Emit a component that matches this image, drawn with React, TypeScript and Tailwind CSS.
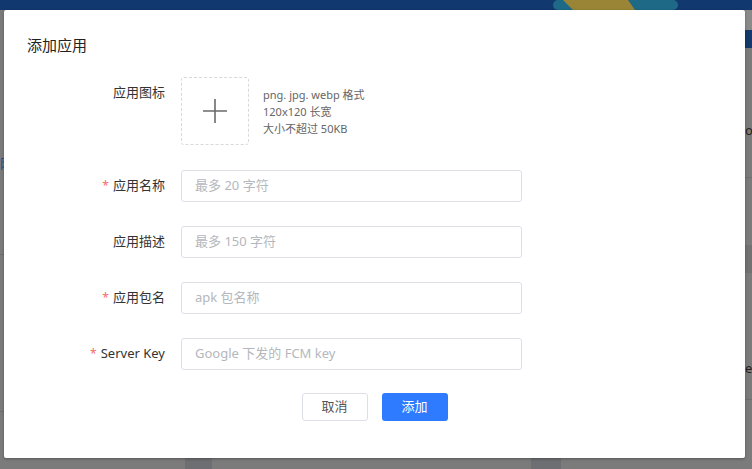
import React from "react";

const font = { fontFamily: '"Noto Sans", "Noto Sans CJK SC", sans-serif' };

function Label({ text, required }: { text: string; required?: boolean }) {
  return (
    <div className="w-[161px] h-[32px] flex items-center justify-end text-[13px] text-[#333]">
      {required && <span className="text-[#f56c6c] mr-[4px] text-[12px]">*</span>}
      {text}
    </div>
  );
}

function Field({
  label,
  required,
  placeholder,
}: {
  label: string;
  required?: boolean;
  placeholder: string;
}) {
  return (
    <div className="flex items-start gap-[16px]">
      <Label text={label} required={required} />
      <div className="w-[341px] h-[32px] border border-[#dcdfe6] rounded-[3px] flex items-center pl-[13px] text-[13px] text-[#b4b7bd]">
        {placeholder}
      </div>
    </div>
  );
}

export default function App() {
  return (
    <div className="relative w-[752px] h-[469px] overflow-hidden bg-[#7b7b7b] flex flex-col" style={font}>
      {/* dimmed page behind the dialog */}
      <div className="h-[10px] bg-[#11386f] overflow-hidden flex">
        <div className="w-[553px]" />
        <svg width="130" height="10" viewBox="0 0 130 10">
          <rect x="0" y="0" width="125" height="10" rx="5" fill="#1e6a86" />
          <path d="M10 0H75L82 10H20Z" fill="#9a8536" />
        </svg>
      </div>
      <div className="flex-1 flex">
        <div className="w-[4px] flex flex-col">
          <div className="h-[143px]" />
          <div className="h-[20px] text-[13px] leading-[20px] text-[#1f4f9a] overflow-hidden">网</div>
          <div className="h-[82px] border-b border-[#6f6f6f]" />
          <div className="h-[157px] border-b border-[#6f6f6f]" />
        </div>
        <div className="flex-1" />
        <div className="w-[7px] flex flex-col">
          <div className="h-[20px] bg-[#8a8a8a]" />
          <div className="h-[18px] bg-[#14386a]" />
          <div className="h-[72px]" />
          <div className="h-[20px] text-[13px] leading-[20px] text-[#222] overflow-hidden">ol</div>
          <div className="h-[38px] border-b border-[#6f6f6f]" />
          <div className="h-[67px]" />
          <div className="h-[28px] bg-[#727272]" />
          <div className="h-[85px]" />
          <div className="h-[20px] text-[13px] leading-[20px] text-[#222] overflow-hidden">e</div>
          <div className="h-[22px] border-b border-[#6f6f6f]" />
        </div>
      </div>
      <div className="h-[11px] flex">
        <div className="w-[185px]" />
        <div className="w-[27px] bg-[#6e6f72]" />
        <div className="w-[319px]" />
        <div className="w-[30px] bg-[#6e6f72]" />
      </div>

      {/* modal dialog */}
      <div className="absolute left-[4px] top-[10px] w-[741px] h-[448px] bg-white rounded-[2px] shadow-[0_1px_3px_rgba(0,0,0,0.3)] flex flex-col">
        <div className="pt-[25px] pl-[23px] text-[15px] leading-[20px] text-[#222]">添加应用</div>

        <div className="mt-[22px] flex flex-col gap-[24px]">
          <div className="flex items-start gap-[16px] mb-[1px]">
            <Label text="应用图标" />
            <div className="flex items-center gap-[14px]">
              <div className="w-[68px] h-[68px] border border-dashed border-[#d9d9d9] rounded-[3px] flex items-center justify-center">
                <svg width="26" height="26" viewBox="0 0 26 26">
                  <path d="M13 1V25M1 13H25" stroke="#6b6b6b" strokeWidth="1.6" />
                </svg>
              </div>
              <div className="flex flex-col text-[11px] leading-[17px] text-[#666]">
                <div>png. jpg. webp 格式</div>
                <div>120x120 长宽</div>
                <div>大小不超过 50KB</div>
              </div>
            </div>
          </div>
          <Field label="应用名称" required placeholder="最多 20 字符" />
          <Field label="应用描述" placeholder="最多 150 字符" />
          <Field label="应用包名" required placeholder="apk 包名称" />
          <Field label="Server Key" required placeholder="Google 下发的 FCM key" />
        </div>

        <div className="mt-[23px] flex justify-center gap-[14px]">
          <button className="w-[66px] h-[28px] border border-[#dcdfe6] rounded-[3px] bg-white text-[13px] text-[#555] flex items-center justify-center">
            取消
          </button>
          <button className="w-[66px] h-[28px] rounded-[3px] bg-[#2f7bff] text-[13px] text-white flex items-center justify-center">
            添加
          </button>
        </div>
      </div>
    </div>
  );
}
